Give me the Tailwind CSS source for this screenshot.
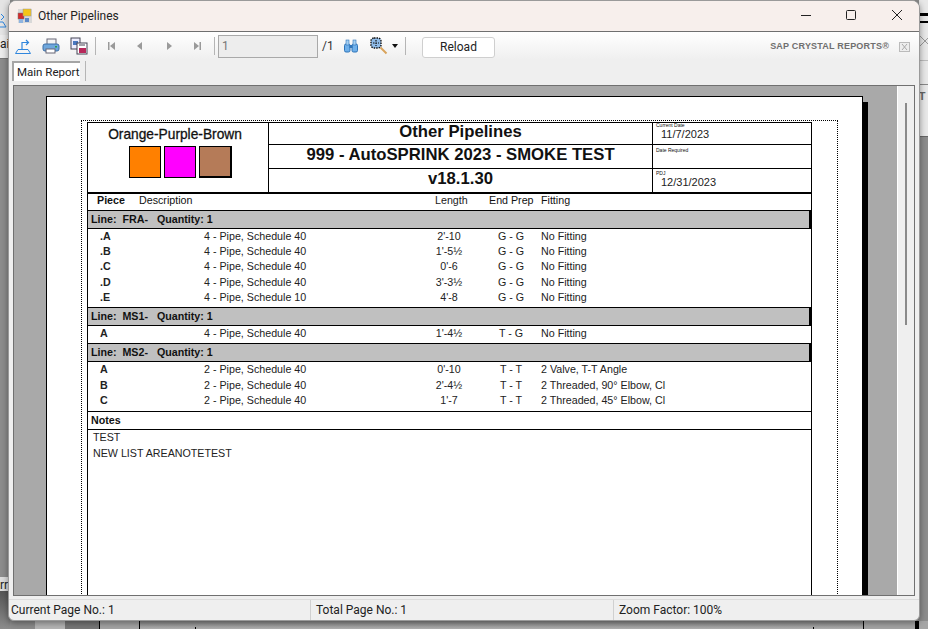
<!DOCTYPE html>
<html><head><meta charset="utf-8"><title>Other Pipelines</title>
<script src="https://cdn.jsdelivr.net/npm/@tailwindcss/browser@4"></script></head>
<body class="m-0 overflow-hidden">
<div class="relative w-[928px] h-[629px] overflow-hidden bg-[#8c8c8c] font-['Roboto',sans-serif]">
  <!-- desktop behind -->
  <div class="absolute left-0 top-0 w-[10px] h-[35px] bg-[#e4e4e4]"></div>
  <div class="absolute left-0 top-[35px] w-[10px] h-[24px] bg-[#ececec] border-b border-[#777]"></div>
  <svg class="absolute left-0 top-[12px] w-[7px] h-[16px]" viewBox="0 0 7 16" fill="none" stroke="#2f86dd"><path d="M0 15h6L3 10H0M1 2l3 3-3 3"/></svg>
  <div class="absolute left-0 top-[37px] h-[15px] text-[12px] leading-[15px] text-[#222]">ai</div>
  <div class="absolute left-0 top-[577px] w-[10px] h-[14px] bg-[#dcdcdc]"></div>
  <div class="absolute left-0 top-[578px] h-[14px] text-[12px] leading-[14px] text-[#222]">rr</div>
  <div class="absolute left-0 top-[591px] w-[10px] h-[38px] bg-gradient-to-b from-[#555] to-[#8c8c8c]"></div>
  <div class="absolute left-[919px] top-0 w-[9px] h-[137px] bg-[#e8e8e8] border-b border-[#666]"></div>
  <div class="absolute left-[919px] top-[13px] w-[9px] h-[3px] bg-black"></div>
  <div class="absolute left-[919px] top-[21px] w-[9px] h-[2px] bg-black"></div>
  <svg class="absolute left-[919px] top-[35px] w-[9px] h-[13px]" viewBox="0 0 9 13" fill="none" stroke="#999"><path d="M1 1l10 10M11 1L1 11"/></svg>
  <div class="absolute left-[919px] top-[60px] w-[9px] h-px bg-[#bbb]"></div>
  <div class="absolute left-[919px] top-[84px] w-[9px] h-px bg-[#888]"></div>
  <div class="absolute left-[912px] top-[90px] w-[16px] overflow-hidden text-[11px] leading-[14px] font-bold text-[#666]">RT</div>
  <div class="absolute left-[35px] top-[621px] w-[30px] h-[8px] bg-[#b5b5b5]"></div>
  <div class="absolute left-[65px] top-[621px] w-[34px] h-[8px] bg-[#777]"></div>
  <div class="absolute left-[99px] top-[621px] w-[40px] h-[8px] bg-[#a5a5a5] border-l border-black"></div>
  <div class="absolute left-[139px] top-[621px] w-[724px] h-[8px] bg-gradient-to-b from-[#888] to-[#b0b0b0] border-l border-black"></div>
  <div class="absolute left-[195px] top-[627px] w-px h-[2px] bg-black"></div>
  <div class="absolute left-[813px] top-[627px] w-px h-[2px] bg-black"></div>
  <div class="absolute left-[863px] top-[621px] w-[65px] h-[8px] bg-[#a5a5a5] border-l border-black"></div>
  <div class="absolute left-[915px] top-[621px] w-[4px] h-[8px] bg-black"></div>

  <!-- window -->
  <div class="absolute left-[8px] top-0 w-[912px] h-[621px] flex flex-col bg-[#efefef] border border-[#9a9a9a] rounded-t-lg rounded-b-md overflow-hidden shadow-[0_2px_6px_rgba(0,0,0,0.4)]">
    <!-- title bar -->
    <div class="h-[31px] shrink-0 flex items-center bg-[#f7efec] border-b border-[#6f6f6f]">
      <svg class="ml-[8px] w-[16px] h-[16px]" viewBox="0 0 16 16"><rect x="1" y="1" width="14" height="14" fill="#d8d8d8"/><rect x="1" y="5" width="6" height="6" fill="#d42a2a" stroke="#777" stroke-width=".5"/><rect x="6" y="1" width="8" height="7" fill="#f5c518" stroke="#999" stroke-width=".5"/><rect x="2" y="11" width="4" height="4" fill="#8fb4e0"/><rect x="8" y="10" width="4" height="4" fill="#5b88c8"/></svg>
      <span class="ml-[5px] text-[12px] text-[#222]">Other Pipelines</span>
      <div class="ml-auto flex items-center">
        <svg class="w-[46px] h-[30px]" viewBox="0 0 46 30"><path d="M20 14.5h10" stroke="#222" fill="none"/></svg>
        <svg class="w-[46px] h-[30px]" viewBox="0 0 46 30"><rect x="19.5" y="9.5" width="9" height="9" rx="1" stroke="#222" fill="none"/></svg>
        <svg class="w-[46px] h-[30px]" viewBox="0 0 46 30"><path d="M19 9l10 10M29 9l-10 10" stroke="#222" fill="none"/></svg>
      </div>
    </div>
    <!-- toolbar -->
    <div class="h-[28px] shrink-0 flex items-center bg-gradient-to-b from-white to-[#efefef] text-[#333] pl-[5px]">
      <svg class="w-[18px] h-[18px]" viewBox="0 0 18 18" fill="none" stroke="#2f86dd"><path d="M1.5 16.5h15l-2.5-4h-10z" /><path d="M8 12V5.5h6M12 3l2.5 2.5L12 8" stroke-width="1.2"/></svg>
      <svg class="ml-[10px] w-[18px] h-[18px]" viewBox="0 0 18 18"><rect x="5" y="2" width="9" height="6" fill="#f4f4f4" stroke="#667"/><rect x="1" y="7" width="16" height="7" rx="2" fill="#6fa7dc" stroke="#3c6ea5"/><rect x="4" y="12" width="9" height="4" fill="#fff" stroke="#667"/><rect x="13" y="9" width="2" height="1.5" fill="#2b9e4a"/></svg>
      <svg class="ml-[10px] w-[18px] h-[18px]" viewBox="0 0 18 18"><rect x="1" y="1" width="9" height="11" fill="#eef" stroke="#445"/><rect x="3" y="4" width="5" height="4" fill="#4a78c0"/><rect x="7" y="6" width="10" height="11" fill="#fff" stroke="#445"/><rect x="9" y="11" width="7" height="5" fill="#b8285a"/><path d="M9 8h6" stroke="#445"/></svg>
      <div class="ml-[7px] w-px h-[18px] bg-[#b5b5b5]"></div>
      <svg class="ml-[12px] w-[8px] h-[10px]" viewBox="0 0 8 10" fill="#9a9a9a"><rect x="0" y="1" width="1.5" height="8"/><path d="M7 1v8L2 5z"/></svg>
      <svg class="ml-[20px] w-[7px] h-[10px]" viewBox="0 0 7 10" fill="#9a9a9a"><path d="M6 1v8L1 5z"/></svg>
      <svg class="ml-[23px] w-[7px] h-[10px]" viewBox="0 0 7 10" fill="#9a9a9a"><path d="M1 1v8l5-4z"/></svg>
      <svg class="ml-[20px] w-[8px] h-[10px]" viewBox="0 0 8 10" fill="#9a9a9a"><path d="M1 1v8l5-4z"/><rect x="6.5" y="1" width="1.5" height="8"/></svg>
      <div class="ml-[13px] w-px h-[18px] bg-[#b5b5b5]"></div>
      <div class="ml-[3px] w-[100px] h-[23px] border border-[#a9a9a9] bg-[#ededed] text-[12px] leading-[20px] pl-[3px] text-[#777]">1</div>
      <span class="ml-[4px] text-[12px] w-[10px]">/1</span>
      <svg class="ml-[11px] w-[16px] h-[16px]" viewBox="0 0 16 16"><rect x="1.5" y="6" width="5.5" height="8" rx="1.5" fill="#6fb0ea" stroke="#2f74b8"/><rect x="9" y="6" width="5.5" height="8" rx="1.5" fill="#6fb0ea" stroke="#2f74b8"/><rect x="3" y="2" width="3" height="5" fill="#a5d0f2" stroke="#2f74b8" stroke-width=".6"/><rect x="10" y="2" width="3" height="5" fill="#a5d0f2" stroke="#2f74b8" stroke-width=".6"/><rect x="6.5" y="7" width="3" height="3" fill="#2f74b8"/></svg>
      <svg class="ml-[11px] w-[18px] h-[18px]" viewBox="0 0 18 18"><rect x="1" y="1" width="10" height="10" rx="3" fill="#8fbbe8" stroke="#111" stroke-width="1.4" stroke-dasharray="1.5 1"/><path d="M3 6h6M6 3v6" stroke="#111" stroke-width="1.2" stroke-dasharray="1.5 1"/><path d="M10.5 10.5l6 6" stroke="#d9a35c" stroke-width="2"/></svg>
      <svg class="ml-[4px] w-[6px] h-[4px]" viewBox="0 0 6 4"><path d="M0 0h6L3 4z" fill="#111"/></svg>
      <div class="ml-[7px] w-px h-[18px] bg-[#b5b5b5]"></div>
      <div class="ml-[16px] mt-[3px] w-[73px] h-[21px] bg-white border border-[#cfcfcf] rounded-[3px] text-[12px] leading-[19px] text-center text-[#222]">Reload</div>
      <div class="ml-auto mt-[2px] flex items-center">
        <span class="text-[9px] font-bold tracking-[0.2px] text-[#6f6f6f] font-['Liberation_Sans',sans-serif]">SAP CRYSTAL REPORTS®</span>
        <svg class="ml-[10px] mr-[9px] w-[11px] h-[10px]" viewBox="0 0 11 10"><rect x=".5" y=".5" width="10" height="9" fill="#eee" stroke="#bbb"/><path d="M3 2l5 6M8 2L3 8" stroke="#aaa"/></svg>
      </div>
    </div>
    <!-- tab row -->
    <div class="h-[25px] shrink-0 flex items-start pl-[3px] pt-[1px]">
      <div class="w-[68px] h-[20px] whitespace-nowrap border-l-2 border-t-2 border-[#a5a5a5] bg-white text-[11.5px] leading-[18px] pl-[3px] text-[#222]">Main Report</div>
      <div class="ml-[5px] w-px h-[20px] bg-[#b5b5b5]"></div>
    </div>
    <!-- viewer -->
    <div class="ml-[4px] w-[902px] h-[511px] shrink-0 flex border border-[#707070] bg-[#a9a9a9] overflow-hidden">
      <div class="w-[883px] h-full pl-[32px] pt-[10px] overflow-hidden">
        <div class="relative w-[817px] h-[520px] bg-white border border-black shadow-[5px_6px_0_#000] pl-[34px] pt-[23px] font-['Liberation_Sans',sans-serif] text-[10.7px] text-[#111]">
          <div class="w-[757px] h-[520px] border-t border-l border-r border-dotted border-black pl-[5px]">
            <div class="w-[725px] h-[520px] border-l border-r border-black border-t mt-px flex flex-col">
              <!-- header -->
              <div class="h-[71px] shrink-0 flex border-b-2 border-black">
                <div class="w-[181px] shrink-0 border-r border-black flex flex-col items-center">
                  <div class="mt-[5px] pr-[6px] text-[13.75px] leading-[14px] text-[#111] whitespace-nowrap [-webkit-text-stroke:0.3px_#111]">Orange-Purple-Brown</div>
                  <div class="mt-[4px] flex gap-[3px] self-start ml-[41px]">
                    <div class="w-[32px] h-[32px] bg-[#ff8000] border border-black"></div>
                    <div class="w-[32px] h-[32px] bg-[#ff00ff] border border-black"></div>
                    <div class="w-[33px] h-[32px] bg-[#b57b58] border-r-2 border-b-2 border-black border-t border-l"></div>
                  </div>
                </div>
                <div class="w-[384px] shrink-0 border-r border-black flex flex-col font-bold text-center text-[16.7px]">
                  <div class="h-[22px] leading-[17px] border-b border-black whitespace-nowrap">Other Pipelines</div>
                  <div class="h-[24px] leading-[20px] border-b border-black whitespace-nowrap">999 - AutoSPRINK 2023 - SMOKE TEST</div>
                  <div class="h-[23px] leading-[19px]">v18.1.30</div>
                </div>
                <div class="flex-1 flex flex-col">
                  <div class="h-[22px] border-b border-black pl-[3px] text-[5px] leading-[5px]">Current Date<div class="text-[11px] leading-[13px] pl-[5px] text-[#222]">11/7/2023</div></div>
                  <div class="h-[24px] border-b border-black pl-[3px] text-[5px] leading-[5px] pt-[3px]">Date Required</div>
                  <div class="flex-1 pl-[3px] text-[5px] leading-[5px] pt-[2px]">PDJ<div class="text-[11px] leading-[13px] pl-[5px] text-[#222]">12/31/2023</div></div>
                </div>
              </div>
              <!-- column header -->
              <div class="h-[16px] shrink-0 grid grid-cols-[51px_296px_54px_52px_1fr] items-center leading-[12px] pb-[4px]">
                <div class="pl-[9px] font-semibold">Piece</div><div>Description</div><div class="text-[#222]">Length</div><div>End Prep</div><div>Fitting</div>
              </div>
              <!-- line groups -->
              <div class="h-[19px] shrink-0 bg-[#c0c0c0] border border-black border-r-2 -ml-px pl-[3px] font-bold leading-[17px]">Line:&nbsp; FRA-&nbsp;&nbsp; Quantity: 1</div>
              <div class="flex flex-col pb-[2px]">
                <div class="grid grid-cols-[116px_209px_72px_52px_1fr] h-[15.2px] items-center leading-[13px] text-[#222]"><div class="pl-[12px] font-bold">.A</div><div>4 - Pipe, Schedule 40</div><div class="text-center">2'-10</div><div class="text-center">G - G</div><div class="pl-[4px]">No Fitting</div></div>
                <div class="grid grid-cols-[116px_209px_72px_52px_1fr] h-[15.2px] items-center leading-[13px] text-[#222]"><div class="pl-[12px] font-bold">.B</div><div>4 - Pipe, Schedule 40</div><div class="text-center">1'-5½</div><div class="text-center">G - G</div><div class="pl-[4px]">No Fitting</div></div>
                <div class="grid grid-cols-[116px_209px_72px_52px_1fr] h-[15.2px] items-center leading-[13px] text-[#222]"><div class="pl-[12px] font-bold">.C</div><div>4 - Pipe, Schedule 40</div><div class="text-center">0'-6</div><div class="text-center">G - G</div><div class="pl-[4px]">No Fitting</div></div>
                <div class="grid grid-cols-[116px_209px_72px_52px_1fr] h-[15.2px] items-center leading-[13px] text-[#222]"><div class="pl-[12px] font-bold">.D</div><div>4 - Pipe, Schedule 40</div><div class="text-center">3'-3½</div><div class="text-center">G - G</div><div class="pl-[4px]">No Fitting</div></div>
                <div class="grid grid-cols-[116px_209px_72px_52px_1fr] h-[15.2px] items-center leading-[13px] text-[#222]"><div class="pl-[12px] font-bold">.E</div><div>4 - Pipe, Schedule 10</div><div class="text-center">4'-8</div><div class="text-center">G - G</div><div class="pl-[4px]">No Fitting</div></div>
              </div>
              <div class="h-[19px] shrink-0 bg-[#c0c0c0] border border-black border-r-2 -ml-px pl-[3px] font-bold leading-[17px]">Line:&nbsp; MS1-&nbsp;&nbsp; Quantity: 1</div>
              <div class="flex flex-col pb-[2px]">
                <div class="grid grid-cols-[116px_209px_72px_52px_1fr] h-[15.2px] items-center leading-[13px] text-[#222]"><div class="pl-[12px] font-bold">A</div><div>4 - Pipe, Schedule 40</div><div class="text-center">1'-4½</div><div class="text-center">T - G</div><div class="pl-[4px]">No Fitting</div></div>
              </div>
              <div class="h-[19px] shrink-0 bg-[#c0c0c0] border border-black border-r-2 -ml-px pl-[3px] font-bold leading-[17px]">Line:&nbsp; MS2-&nbsp;&nbsp; Quantity: 1</div>
              <div class="flex flex-col">
                <div class="grid grid-cols-[116px_209px_72px_52px_1fr] h-[15.5px] items-center leading-[13px] text-[#222]"><div class="pl-[12px] font-bold">A</div><div>2 - Pipe, Schedule 40</div><div class="text-center">0'-10</div><div class="text-center">T - T</div><div class="pl-[4px]">2 Valve, T-T Angle</div></div>
                <div class="grid grid-cols-[116px_209px_72px_52px_1fr] h-[15.5px] items-center leading-[13px] text-[#222]"><div class="pl-[12px] font-bold">B</div><div>2 - Pipe, Schedule 40</div><div class="text-center">2'-4½</div><div class="text-center">T - T</div><div class="pl-[4px]">2 Threaded, 90° Elbow, Cl</div></div>
                <div class="grid grid-cols-[116px_209px_72px_52px_1fr] h-[15.5px] items-center leading-[13px] text-[#222]"><div class="pl-[12px] font-bold">C</div><div>2 - Pipe, Schedule 40</div><div class="text-center">1'-7</div><div class="text-center">T - T</div><div class="pl-[4px]">2 Threaded, 45° Elbow, Cl</div></div>
              </div>
              <div class="h-[19px] shrink-0 mt-[2px] border-t border-b border-black pl-[3px] font-bold leading-[17px]">Notes</div>
              <div class="pl-[5px] text-[#222]"><div class="h-[16px] leading-[14px]">TEST</div><div class="leading-[14px]">NEW LIST AREANOTETEST</div></div>
            </div>
          </div>
        </div>
      </div>
      <!-- scrollbar -->
      <div class="flex-1 bg-[#efefef] border-l border-white pl-[7px] pt-[17px]"><div class="w-[2px] h-[222px] bg-[#8a8a8a]"></div></div>
    </div>
    <!-- status bar -->
    <div class="mt-[3px] flex-1 border-t border-[#dcdcdc] grid grid-cols-[302px_303px_1fr] text-[12px] text-[#222]">
      <div class="pl-[2px] border-r border-[#d0d0d0] h-full leading-[21px]">Current Page No.: 1</div>
      <div class="pl-[5px] border-r border-[#d0d0d0] h-full leading-[21px]">Total Page No.: 1</div>
      <div class="pl-[5px] h-full leading-[21px]">Zoom Factor: 100%</div>
    </div>
  </div>
</div>
</body></html>
